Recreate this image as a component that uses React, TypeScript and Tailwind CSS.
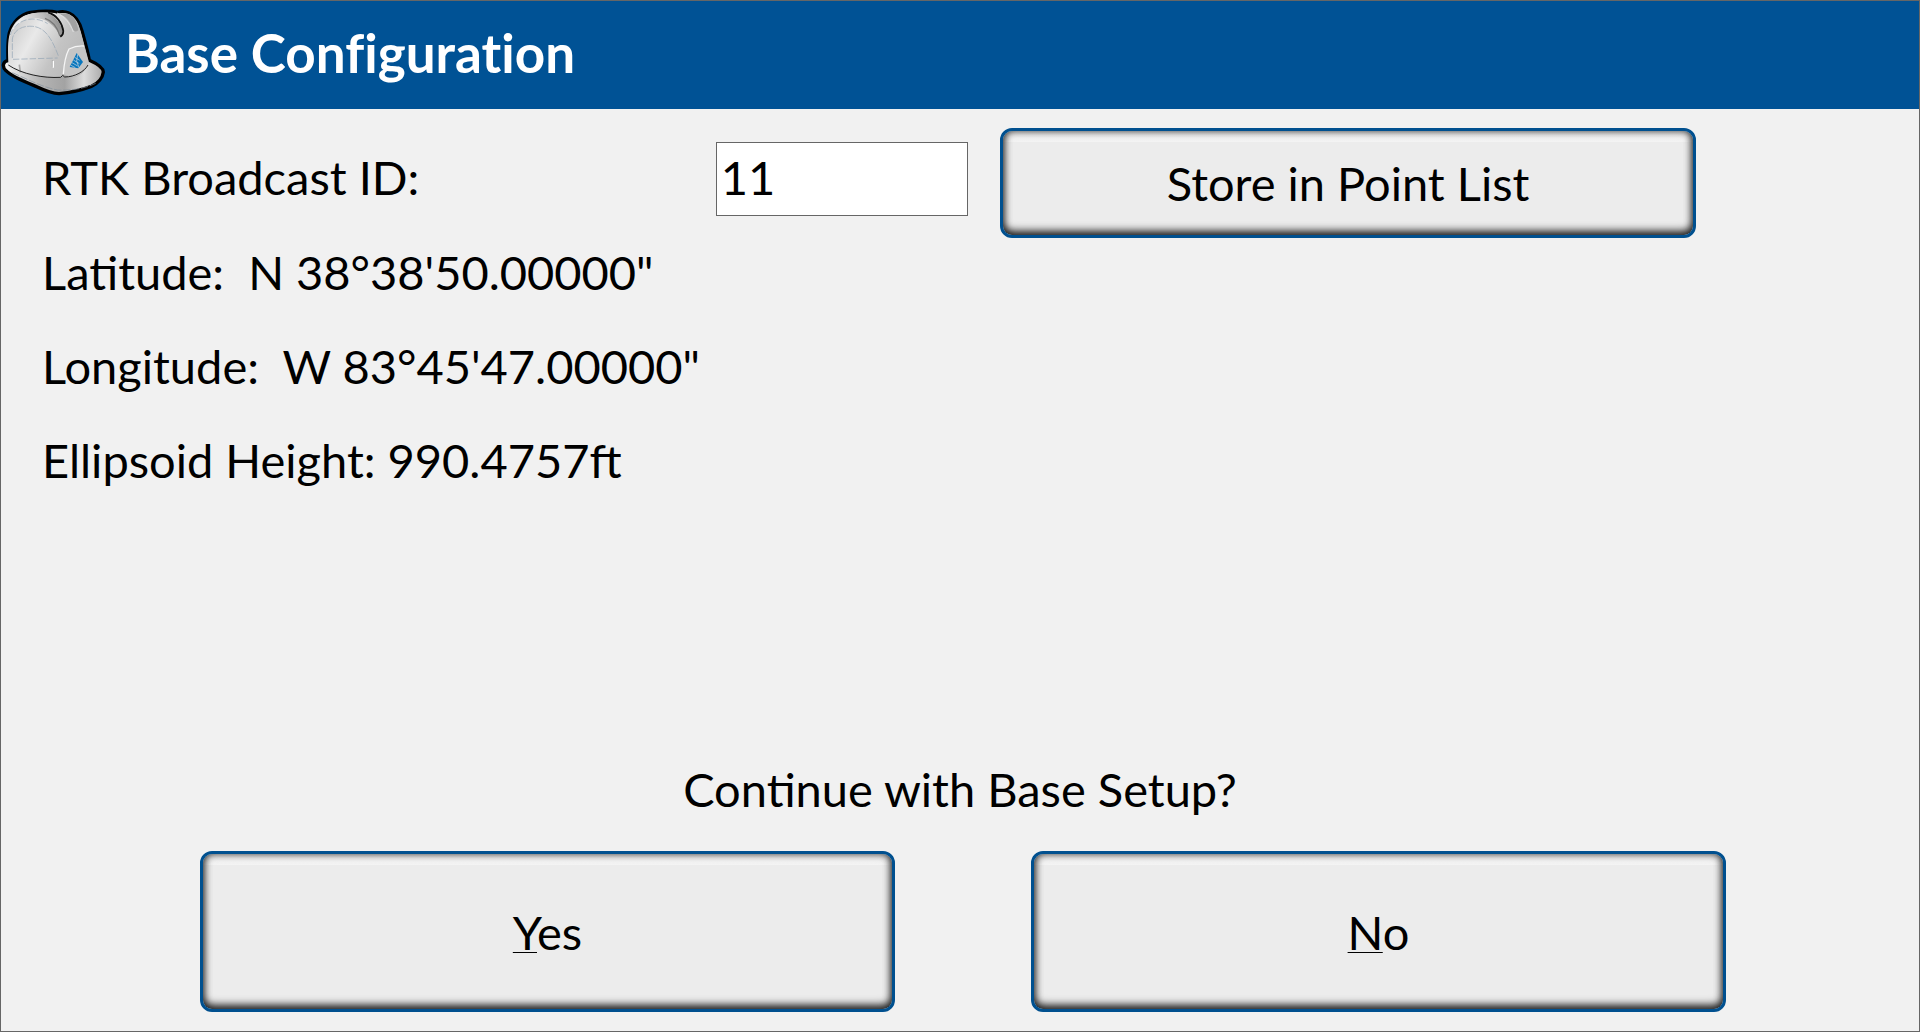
import type { ReactNode } from "react";

function HelmetIcon() {
    return (
        <svg className="h-[108px] w-[120px] shrink-0" viewBox="3 3 360 324" fill="none" aria-hidden="true">
            <defs>
                <linearGradient id="dome" x1="30" y1="70" x2="265" y2="200" gradientUnits="userSpaceOnUse">
                    <stop offset="0" stopColor="#c9c9c9" />
                    <stop offset="0.3" stopColor="#e9e9e9" />
                    <stop offset="0.6" stopColor="#c4c4c4" />
                    <stop offset="1" stopColor="#b4b4b4" />
                </linearGradient>
                <linearGradient id="brim" x1="20" y1="0" x2="310" y2="0" gradientUnits="userSpaceOnUse">
                    <stop offset="0" stopColor="#eeeeee" />
                    <stop offset="0.35" stopColor="#b4b4b4" />
                    <stop offset="0.6" stopColor="#a3a3a3" />
                    <stop offset="0.8" stopColor="#dddddd" />
                    <stop offset="1" stopColor="#a8a8a8" />
                </linearGradient>
                <linearGradient id="ridge" x1="60" y1="90" x2="185" y2="50" gradientUnits="userSpaceOnUse">
                    <stop offset="0" stopColor="#f1f1f1" />
                    <stop offset="0.6" stopColor="#bcbcbc" />
                    <stop offset="1" stopColor="#858585" />
                </linearGradient>
            </defs>
            <path
                d="M24 182C9 183 5 200 18 212C36 231 78 247 108 259C131 270 151 280 177 281C207 278 245 270 274 259C296 250 308 232 310 216C309 202 286 189 268 181C263 153 253 119 246 93C239 66 226 47 207 39C196 34 183 34 172 37C151 31 112 34 91 37C61 43 37 68 28 99C22 124 23 155 24 182Z"
                fill="url(#brim)" stroke="#000" strokeWidth="10" strokeLinejoin="round"
            />
            <path
                d="M25 188C24 157 22 124 30 99C39 68 62 46 92 41C119 37 149 36 172 41C185 38 197 39 207 43C225 51 235 68 242 94L266 183C265 205 246 227 218 233L191 225L183 231C137 235 63 221 25 188Z"
                fill="url(#dome)"
            />
            <path
                d="M27 125C31 87 60 59 96 54C133 51 160 70 181 108L190 105C184 66 163 45 138 39C101 34 64 45 43 75C32 91 29 108 27 125Z"
                fill="url(#ridge)"
            />
            <path d="M151 39C174 49 187 71 190 97C190 106 184 111 179 106C172 82 156 62 135 55" stroke="#777" strokeWidth="4" />
            <path d="M144 37C169 45 186 67 190 93C190 101 186 107 181 110" stroke="#111" strokeWidth="5" />
            <path d="M170 40C197 47 210 63 218 86C222 94 228 97 235 91C232 66 221 48 204 41Z" fill="#a2a2a2" />
            <path d="M171 39C194 50 210 69 220 96" stroke="#e0e0e0" strokeWidth="3" />
            <path d="M37 174V117C41 92 64 76 98 79C133 82 154 111 176 170" stroke="#91a3b4" strokeWidth="2" strokeDasharray="20 4" />
            <path d="M39 178L173 174M31 105C39 76 67 58 96 57C114 57 132 63 143 71" stroke="#91a3b4" strokeWidth="2" strokeDasharray="19 6" />
            <path d="M58 194L61 217M158 180V202" stroke="#aaa" strokeWidth="5" />
            <path d="M160 182V203" stroke="#fff" strokeWidth="4" />
            <path d="M190 222C192 192 198 164 207 147C219 141 237 137 252 138L266 187C262 204 246 222 220 231Z" fill="#c5c5c5" />
            <path d="M190 222C192 192 198 164 207 147C219 141 237 137 252 138" stroke="#f5f5f5" strokeWidth="4" />
            <path d="M25 195C66 223 130 235 182 232L188 226L194 231C225 231 254 214 264 195" stroke="#222" strokeWidth="3" />
            <path d="M37 218C84 238 127 262 173 270C215 272 255 266 287 250" stroke="#82909c" strokeWidth="2" strokeDasharray="22 5" />
            <path d="M230 159L249 186L235 205L209 201Z" fill="#0876bd" />
            <path d="M224 172L239 181M220 180L238 191M216 188L233 198M213 196L226 203M233 163L230 183L237 203" stroke="#d0dbe2" strokeWidth="2" />
        </svg>
    );
}

function BevelButton({ className = "", children }: { className?: string; children: ReactNode }) {
    return (
        <button
            type="button"
            className={`rounded-xl border-3 border-[#00508f] bg-[#ececec] bg-[linear-gradient(#f8f8f8_0px,#f3f3f3_11px,transparent_11px)] shadow-[inset_0_-4px_9px_rgba(0,0,0,0.75),inset_0_0_8px_rgba(0,0,0,0.7)] ${className}`}
        >
            {children}
        </button>
    );
}

export default function App() {
    return (
        <div className="flex min-h-screen flex-col border border-[#666] bg-[#f1f1f1] font-[Lato,sans-serif] text-[47px] leading-[60px] text-black">
            <header className="flex items-center bg-[#005295] text-white">
                <HelmetIcon />
                <h1 className="pb-1 pl-1 text-[53px] font-bold [font-variant-ligatures:none]">Base Configuration</h1>
            </header>

            <main className="flex flex-1 flex-col pb-[19px]">
                <section className="pt-[19px] pl-[41px]">
                    <div className="grid grid-cols-[641fr_252fr_695fr] items-start gap-8 pr-[223px]">
                        <label htmlFor="broadcast-id" className="pt-[19px]">RTK Broadcast ID:</label>
                        <input
                            id="broadcast-id"
                            type="text"
                            defaultValue="11"
                            className="mt-[14px] h-[74px] w-full min-w-0 border border-[#666] bg-white px-1 pb-1 outline-none"
                        />
                        <BevelButton className="h-[110px]">Store in Point List</BevelButton>
                    </div>
                    <div className="flex flex-col gap-[34px] pt-1 whitespace-pre">
                        <p>Latitude:  N 38°38'50.00000"</p>
                        <p>Longitude:  W 83°45'47.00000"</p>
                        <p>Ellipsoid Height: 990.4757ft</p>
                    </div>
                </section>

                <section className="mt-auto">
                    <p className="text-center">Continue with Base Setup?</p>
                    <div className="grid grid-cols-2 gap-[136px] pt-8 pr-[193px] pl-[199px]">
                        <BevelButton className="h-[161px]">
                            <u className="decoration-1 underline-offset-2">Y</u>es
                        </BevelButton>
                        <BevelButton className="h-[161px]">
                            <u className="decoration-1 underline-offset-2">N</u>o
                        </BevelButton>
                    </div>
                </section>
            </main>
        </div>
    );
}
